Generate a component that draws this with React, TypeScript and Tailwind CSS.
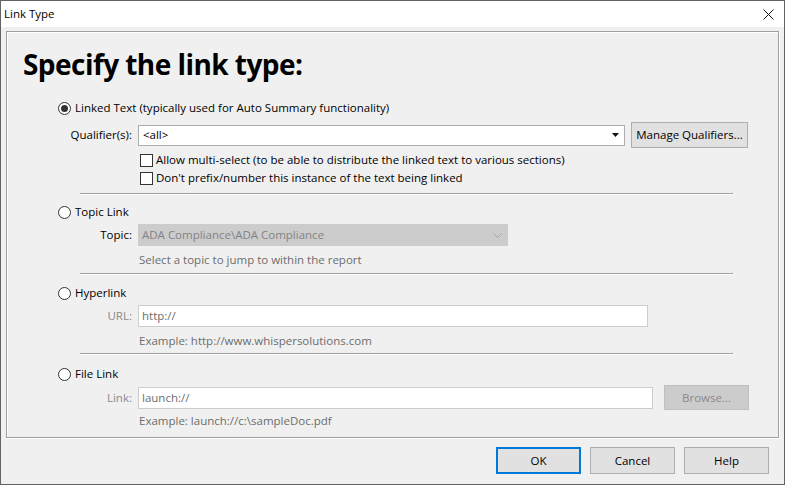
const font = { fontFamily: '"Open Sans", "Noto Sans", sans-serif' };

const Radio = ({ checked = false }: { checked?: boolean }) => (
  <span className="flex h-[13px] w-[13px] shrink-0 items-center justify-center rounded-full border border-[#333333] bg-white">
    {checked && <span className="h-[7px] w-[7px] rounded-full bg-[#333333]" />}
  </span>
);

const Check = () => (
  <span className="h-[13px] w-[13px] shrink-0 border border-[#333333] bg-white" />
);

const Sep = () => (
  <div className="ml-[73px] w-[653px] border-t border-b border-t-[#a0a0a0] border-b-white" />
);

const Label = ({ children, dim = false }: { children: React.ReactNode; dim?: boolean }) => (
  <div className={`w-[75px] shrink-0 pr-[1px] text-right ${dim ? "text-[#8a8a8a]" : "text-black"}`}>
    {children}
  </div>
);

const Button = ({
  children,
  w,
  disabled = false,
  primary = false,
}: {
  children: React.ReactNode;
  w: string;
  disabled?: boolean;
  primary?: boolean;
}) => (
  <div
    className={`flex h-full shrink-0 items-center justify-center ${w} ${
      disabled
        ? "border border-[#bfbfbf] bg-[#cccccc] text-[#8a8a8a]"
        : primary
          ? "border-2 border-[#0078d7] bg-[#e1e1e1] text-black"
          : "border border-[#adadad] bg-[#e1e1e1] text-black"
    }`}
  >
    {children}
  </div>
);

export default function App() {
  return (
    <div
      className="flex h-[485px] w-[785px] flex-col border border-[#646464] bg-[#f0f0f0] text-[11.5px] leading-[16px] text-black"
      style={font}
    >
      {/* title bar */}
      <div className="flex h-[26px] shrink-0 items-center justify-between bg-white pl-[3px] pr-[10px]">
        <span>Link Type</span>
        <svg width="11" height="11" viewBox="0 0 11 11" className="mt-[1px]">
          <path d="M0.5 0.5 L10.5 10.5 M10.5 0.5 L0.5 10.5" stroke="#111" strokeWidth="1" />
        </svg>
      </div>

      {/* panel */}
      <div className="mx-[5px] mt-[4px] flex h-[407px] flex-col border border-[#a0a0a0] shadow-[inset_1px_1px_0_white,1px_1px_0_white]">
        <div className="mt-[13px] flex h-[38px] items-center pl-[16px] text-[28px] font-bold leading-[38px] tracking-[-0.55px]">
          Specify the link type:
        </div>

        <div className="ml-[51px] mt-[17px] flex h-[16px] items-center gap-[4px]">
          <Radio checked />
          <span>Linked Text (typically used for Auto Summary functionality)</span>
        </div>

        <div className="ml-[51px] mt-[6px] flex h-[26px] items-center">
          <Label>Qualifier(s):</Label>
          <div className="ml-[5px] flex h-[21px] w-[487px] items-center justify-between border border-[#adadad] bg-white pl-[4px] pr-[5px]">
            <span>&lt;all&gt;</span>
            <svg width="7" height="4" viewBox="0 0 7 4">
              <path d="M0 0 H7 L3.5 4 Z" fill="#111" />
            </svg>
          </div>
          <div className="ml-[6px] h-[26px]">
            <Button w="w-[117px]">Manage Qualifiers...</Button>
          </div>
        </div>

        <div className="ml-[133px] mt-[4px] flex h-[16px] items-center gap-[3px]">
          <Check />
          <span>Allow multi-select (to be able to distribute the linked text to various sections)</span>
        </div>
        <div className="ml-[133px] mt-[2px] flex h-[16px] items-center gap-[3px]">
          <Check />
          <span>Don&apos;t prefix/number this instance of the text being linked</span>
        </div>

        <div className="mt-[7px]">
          <Sep />
        </div>

        <div className="ml-[51px] mt-[9px] flex h-[16px] items-center gap-[4px]">
          <Radio />
          <span>Topic Link</span>
        </div>
        <div className="ml-[51px] mt-[4px] flex h-[22px] items-center">
          <Label>Topic:</Label>
          <div className="ml-[5px] flex h-[22px] w-[370px] items-center justify-between bg-[#cccccc] pl-[4px] pr-[6px] text-[#838383]">
            <span>ADA Compliance\ADA Compliance</span>
            <svg width="9" height="5" viewBox="0 0 9 5">
              <path d="M0.5 0.5 L4.5 4.5 L8.5 0.5" stroke="#a3a3a3" strokeWidth="1" fill="none" />
            </svg>
          </div>
        </div>
        <div className="ml-[132px] mt-[6px] flex h-[16px] items-center text-[#6d6d6d]">
          Select a topic to jump to within the report
        </div>

        <div className="mt-[5px]">
          <Sep />
        </div>

        <div className="ml-[51px] mt-[10px] flex h-[16px] items-center gap-[4px]">
          <Radio />
          <span>Hyperlink</span>
        </div>
        <div className="ml-[51px] mt-[4px] flex h-[22px] items-center">
          <Label dim>URL:</Label>
          <div className="ml-[5px] flex h-[22px] w-[510px] items-center border border-[#cccccc] bg-white pl-[3px] text-[#6d6d6d]">
            http://
          </div>
        </div>
        <div className="ml-[132px] mt-[6px] flex h-[16px] items-center text-[#6d6d6d]">
          Example: http://www.whispersolutions.com
        </div>

        <div className="mt-[4px]">
          <Sep />
        </div>

        <div className="ml-[51px] mt-[11px] flex h-[16px] items-center gap-[4px]">
          <Radio />
          <span>File Link</span>
        </div>
        <div className="ml-[51px] mt-[3px] flex h-[25px] items-center">
          <Label dim>Link:</Label>
          <div className="ml-[5px] flex h-[22px] w-[515px] items-center border border-[#cccccc] bg-white pl-[3px] text-[#6d6d6d]">
            launch://
          </div>
          <div className="ml-[11px] h-[25px]">
            <Button w="w-[85px]" disabled>
              Browse...
            </Button>
          </div>
        </div>
        <div className="ml-[132px] mt-[3px] flex h-[16px] items-center text-[#6d6d6d]">
          Example: launch://c:\sampleDoc.pdf
        </div>
      </div>

      {/* footer buttons */}
      <div className="mt-[9px] flex h-[27px] justify-end gap-[9px] pr-[15px]">
        <Button w="w-[85px]" primary>
          OK
        </Button>
        <Button w="w-[85px]">Cancel</Button>
        <Button w="w-[85px]">Help</Button>
      </div>
    </div>
  );
}
